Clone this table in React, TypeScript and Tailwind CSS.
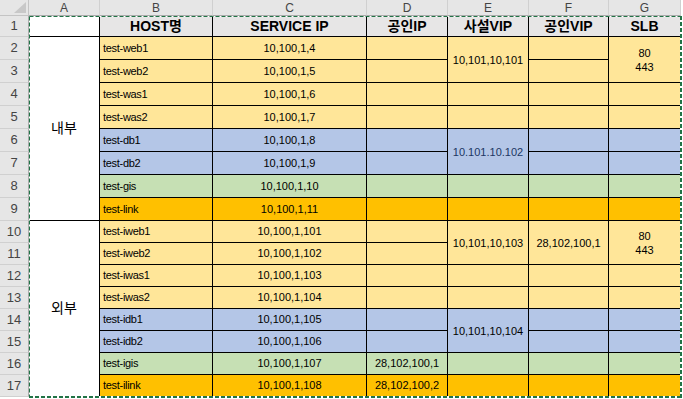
import React from "react";

type Span = { t: string; span?: boolean; blue?: boolean };
type Cell = string | Span | null;

interface Row {
  n: number;
  host: string;
  ip: string;
  bg: string;
  cells: Cell[]; // D, E, F, G  (null = covered by merge above)
}

const Y = "bg-[#ffe699]";
const B = "bg-[#b4c6e7]";
const G = "bg-[#c6e0b4]";
const O = "bg-[#ffc000]";

const rows: Row[] = [
  { n: 2, host: "test-web1", ip: "10,100,1,4", bg: Y, cells: ["", { t: "10,101,10,101", span: true }, "", { t: "80\n443", span: true }] },
  { n: 3, host: "test-web2", ip: "10,100,1,5", bg: Y, cells: ["", null, "", null] },
  { n: 4, host: "test-was1", ip: "10,100,1,6", bg: Y, cells: ["", "", "", ""] },
  { n: 5, host: "test-was2", ip: "10,100,1,7", bg: Y, cells: ["", "", "", ""] },
  { n: 6, host: "test-db1", ip: "10,100,1,8", bg: B, cells: ["", { t: "10.101.10.102", span: true, blue: true }, "", ""] },
  { n: 7, host: "test-db2", ip: "10,100,1,9", bg: B, cells: ["", null, "", ""] },
  { n: 8, host: "test-gis", ip: "10,100,1,10", bg: G, cells: ["", "", "", ""] },
  { n: 9, host: "test-link", ip: "10,100,1,11", bg: O, cells: ["", "", "", ""] },
  { n: 10, host: "test-iweb1", ip: "10,100,1,101", bg: Y, cells: ["", { t: "10,101,10,103", span: true }, { t: "28,102,100,1", span: true }, { t: "80\n443", span: true }] },
  { n: 11, host: "test-iweb2", ip: "10,100,1,102", bg: Y, cells: ["", null, null, null] },
  { n: 12, host: "test-iwas1", ip: "10,100,1,103", bg: Y, cells: ["", "", "", ""] },
  { n: 13, host: "test-iwas2", ip: "10,100,1,104", bg: Y, cells: ["", "", "", ""] },
  { n: 14, host: "test-idb1", ip: "10,100,1,105", bg: B, cells: ["", { t: "10,101,10,104", span: true }, "", ""] },
  { n: 15, host: "test-idb2", ip: "10,100,1,106", bg: B, cells: ["", null, "", ""] },
  { n: 16, host: "test-igis", ip: "10,100,1,107", bg: G, cells: ["28,102,100,1", "", "", ""] },
  { n: 17, host: "test-ilink", ip: "10,100,1,108", bg: O, cells: ["28,102,100,2", "", "", ""] },
];

const letters = ["A", "B", "C", "D", "E", "F", "G"];
const heads = ["HOST명", "SERVICE IP", "공인IP", "사설VIP", "공인VIP", "SLB"];

const RowNum = ({ n }: { n: number }) => (
  <div className="bg-[#e6e6e6] border-r border-b border-r-[#ababab] border-b-[#d0d0d0] flex items-center justify-center text-[13px] text-[#444]">
    {n}
  </div>
);

export default function App() {
  return (
    <div
      className="relative w-[683px] h-[399px] overflow-hidden bg-white"
      style={{ fontFamily: '"Liberation Sans", "Noto Sans CJK KR", sans-serif' }}
    >
      <div className="grid grid-cols-[29px_71px_113px_154px_81px_81px_80px_72px] grid-rows-[16px_21px_repeat(8,23px)_repeat(8,22px)]">
        {/* column letters */}
        <div className="relative bg-[#e6e6e6] border-r border-b border-[#c4c4c4]">
          <svg className="absolute right-[2px] bottom-[2px]" width="12" height="11" viewBox="0 0 12 11">
            <polygon points="12,0 12,11 0,11" fill="#c8c8c8" />
          </svg>
        </div>
        {letters.map((l) => (
          <div
            key={l}
            className="bg-[#e6e6e6] border-r border-b border-r-[#d0d0d0] border-b-[#ababab] flex items-center justify-center text-[12px] text-[#444] leading-none"
          >
            {l}
          </div>
        ))}

        {/* row 1 */}
        <RowNum n={1} />
        <div className="bg-white border-r border-b border-black" />
        {heads.map((h) => (
          <div
            key={h}
            className="bg-[#e7e6e6] border-r border-b border-black flex items-center justify-center text-[14px] font-bold text-black"
          >
            {h}
          </div>
        ))}

        {rows.map((r) => (
          <React.Fragment key={r.n}>
            <RowNum n={r.n} />
            {r.n === 2 && (
              <div className="row-span-8 bg-white border-r border-b border-black flex items-center justify-center text-[14px] text-black">
                내부
              </div>
            )}
            {r.n === 10 && (
              <div className="row-span-8 bg-white border-r border-b border-black flex items-center justify-center text-[14px] text-black">
                외부
              </div>
            )}
            <div className={`${r.bg} border-r border-b border-black flex items-center pl-[3px] text-[11px] tracking-[-0.3px] text-black`}>
              {r.host}
            </div>
            <div className={`${r.bg} border-r border-b border-black flex items-center justify-center text-[11px] text-black`}>
              {r.ip}
            </div>
            {r.cells.map((c, i) => {
              if (c === null) return null;
              if (typeof c === "string") {
                return (
                  <div
                    key={i}
                    className={`${r.bg} border-r border-b border-black flex items-center justify-center text-[11px] text-black`}
                  >
                    {c}
                  </div>
                );
              }
              return (
                <div
                  key={i}
                  className={`${r.bg} ${c.span ? "row-span-2" : ""} border-r border-b border-black flex flex-col items-center justify-center text-[11px] leading-[14px] ${
                    c.blue ? "text-[#203764]" : "text-black"
                  }`}
                >
                  {c.t.split("\n").map((line) => (
                    <span key={line}>{line}</span>
                  ))}
                </div>
              );
            })}
          </React.Fragment>
        ))}
      </div>

      {/* copy marquee */}
      <svg className="absolute left-0 top-0 pointer-events-none" width="683" height="399">
        <g fill="none">
          <path d="M29.5 16.5 H681 M29.5 16.5 V397" stroke="#ffffff" strokeWidth="1" />
          <path d="M29.5 16.5 H681 M29.5 16.5 V397" stroke="#217346" strokeWidth="1" strokeDasharray="4 2" />
          <path d="M681 16 V398 M29 397 H682" stroke="#ffffff" strokeWidth="2" />
          <path d="M681 16 V398 M29 397 H682" stroke="#217346" strokeWidth="2" strokeDasharray="4 2" />
        </g>
      </svg>
    </div>
  );
}
